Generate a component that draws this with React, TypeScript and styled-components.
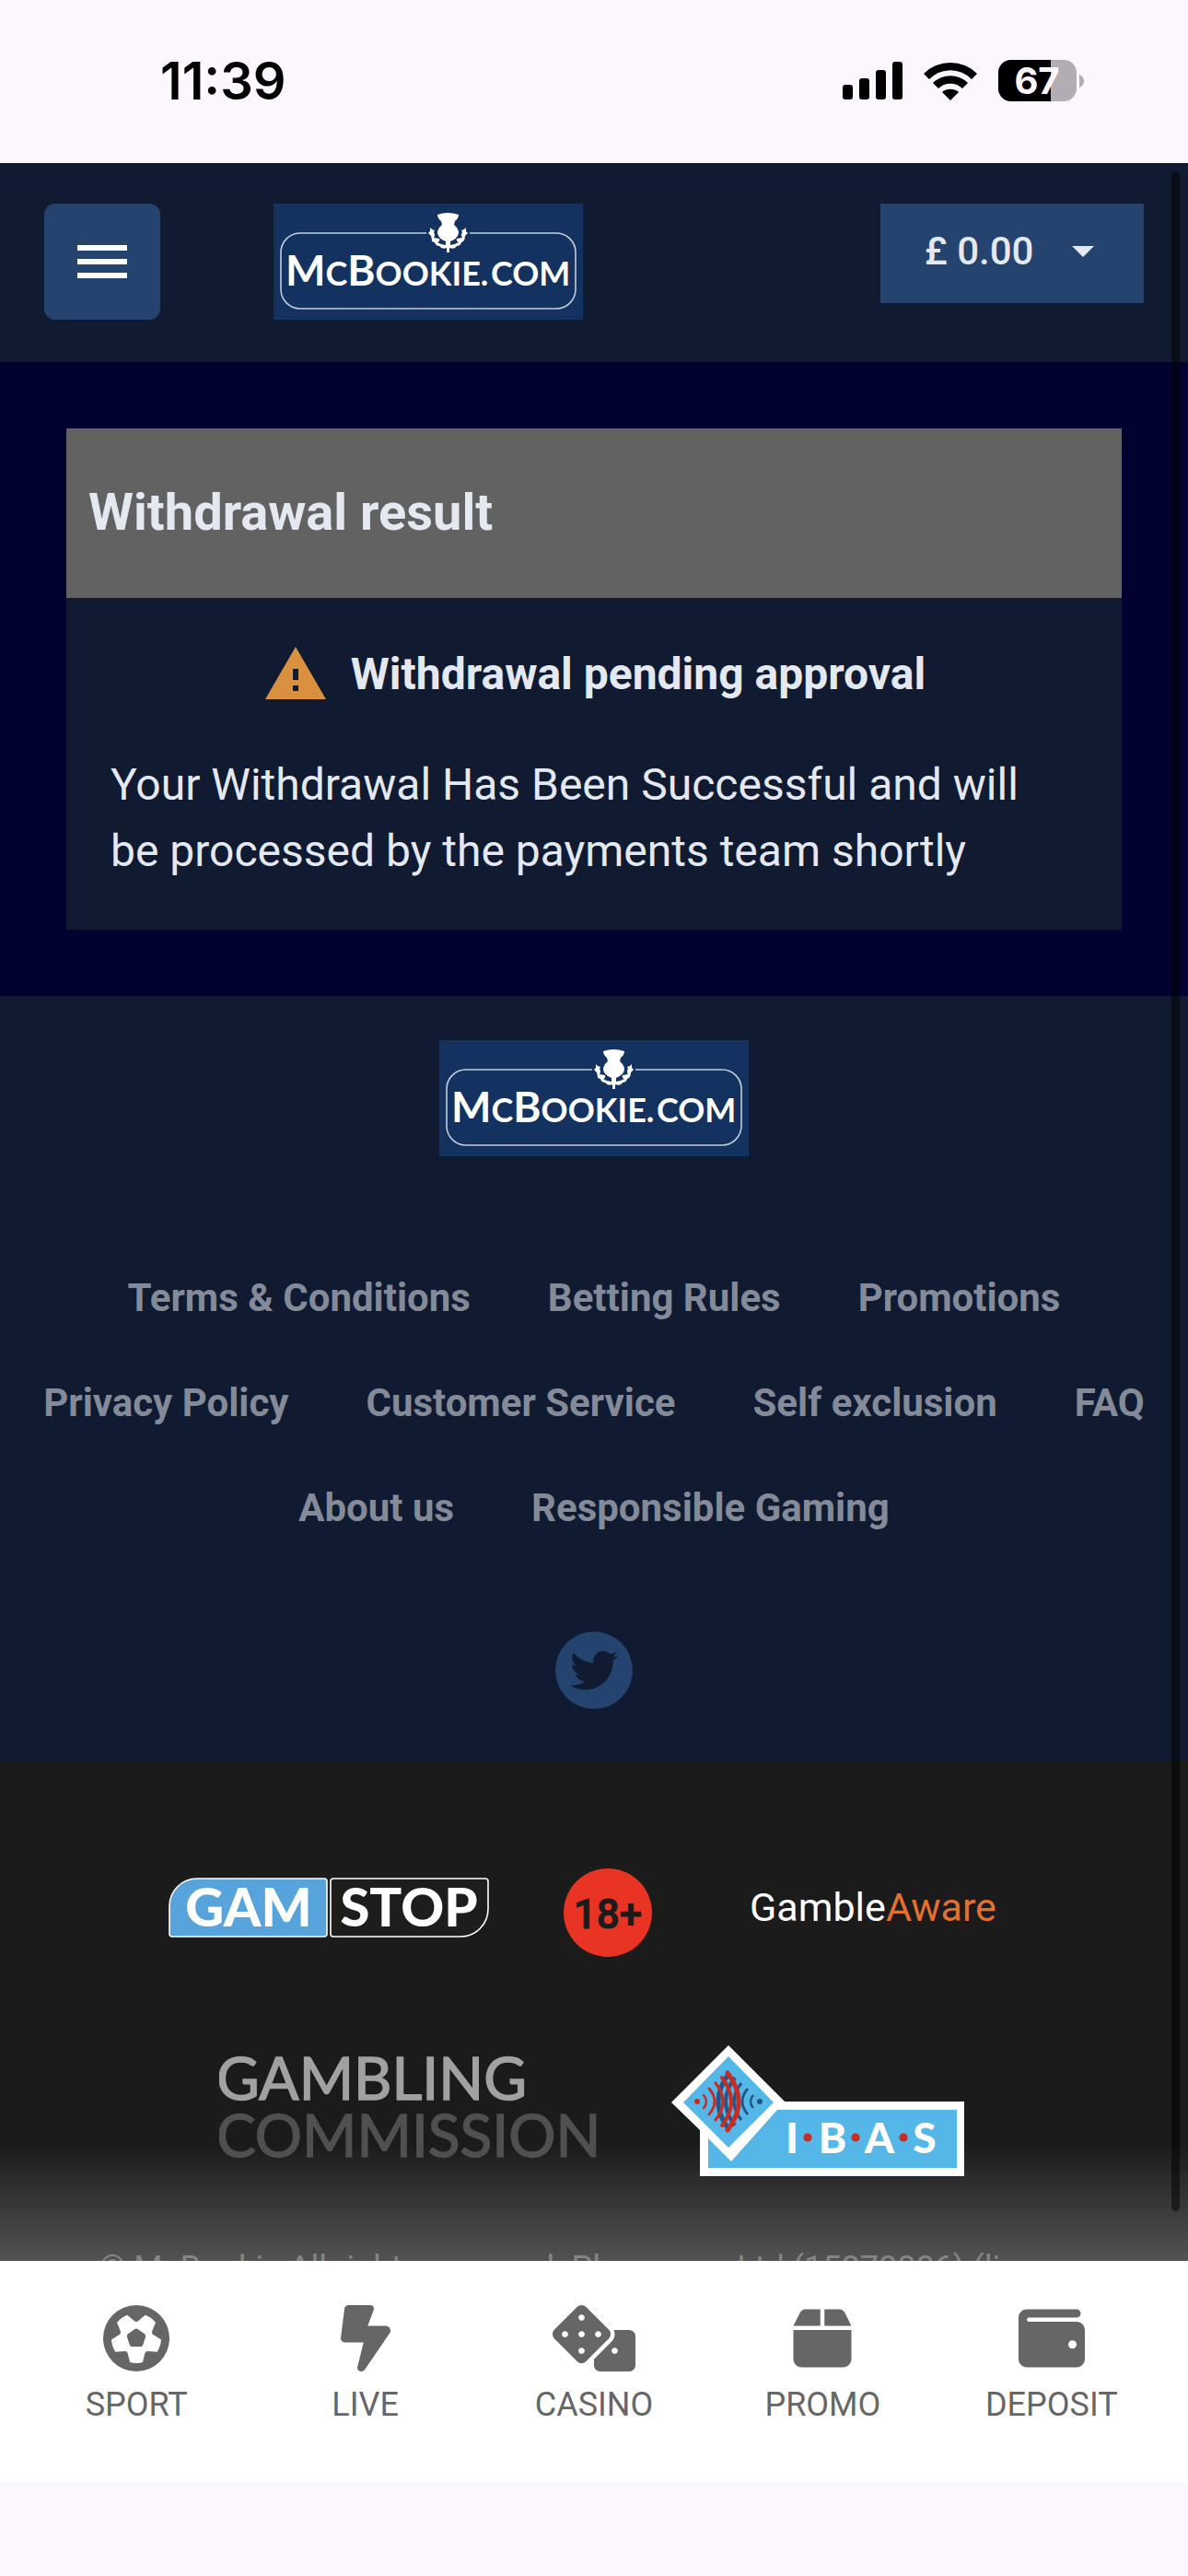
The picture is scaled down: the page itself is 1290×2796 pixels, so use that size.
import React from "react";
import styled, { createGlobalStyle } from "styled-components";
import { FaDice } from "react-icons/fa";
import { MdMenu, MdWarning } from "react-icons/md";
import {
  FaBoltLightning,
  FaBox,
  FaFutbol,
  FaTwitter,
  FaWallet,
} from "react-icons/fa6";

const color = {
  chrome: "#fcf7ff",
  navy: "#101a31",
  deep: "#020230",
  blue: "#24446f",
  logo: "#13325f",
  heading: "#626262",
  text: "#e4e9f1",
  muted: "#838a98",
  amber: "#d9913f",
  dark: "#1b1b1b",
  nav: "#666666",
};

const GlobalStyle = createGlobalStyle`
  *, *::before, *::after { box-sizing: border-box; }
  body {
    margin: 0;
    background: ${color.chrome};
    color: ${color.text};
    font-family: Roboto, "Liberation Sans", sans-serif;
  }
  h1, h2, p, ul { margin: 0; padding: 0; }
  button { border: 0; padding: 0; font: inherit; color: inherit; cursor: pointer; }
  a { color: inherit; text-decoration: none; }
  svg { display: block; flex: none; }
`;

const Screen = styled.div`
  display: flex;
  flex-direction: column;
  height: 100vh;
`;

const StatusBar = styled.div`
  display: flex;
  align-items: center;
  justify-content: space-between;
  height: 177px;
  flex: none;
  padding: 0 112px 2px 174px;
  color: #000;
`;

const Clock = styled.time`
  font: 600 56px/60px Inter, sans-serif;
`;

const Indicators = styled.div`
  display: flex;
  align-items: center;
  gap: 23px;
`;

const Viewport = styled.main`
  position: relative;
  flex: 1;
  min-height: 0;
  overflow: hidden;
  background: ${color.dark};
`;

const ScrollThumb = styled.div`
  position: absolute;
  top: 9px;
  right: 9px;
  bottom: 54px;
  width: 9px;
  border-radius: 5px;
  background: rgba(0, 0, 0, 0.5);
`;

const BottomFade = styled.div`
  position: absolute;
  left: 0;
  right: 0;
  bottom: 0;
  height: 126px;
  background: linear-gradient(rgba(128, 128, 128, 0), rgba(128, 128, 128, 0.55));
  pointer-events: none;
`;

const Header = styled.header`
  display: flex;
  align-items: flex-start;
  padding: 44px 48px 46px;
  background: ${color.navy};
`;

const MenuButton = styled.button`
  display: grid;
  place-items: center;
  width: 126px;
  height: 126px;
  margin-right: 123px;
  border-radius: 12px;
  background: ${color.blue};
  color: #fff;
  font-size: 72px;
`;

const BalanceButton = styled.button`
  display: flex;
  align-items: center;
  justify-content: space-between;
  width: 286px;
  height: 108px;
  margin-left: auto;
  padding: 0 54px 4px 48px;
  background: ${color.blue};
  font-size: 42px;
  font-weight: 500;
  line-height: 48px;
`;

const Result = styled.section`
  padding: 72px;
  background: ${color.deep};
`;

const CardTitle = styled.h1`
  padding: 59px 24px 61px;
  background: ${color.heading};
  font-size: 56px;
  font-weight: 700;
  line-height: 64px;
`;

const CardBody = styled.div`
  display: grid;
  gap: 48px;
  padding: 47px 48px 49px;
  background: ${color.navy};
  font-size: 48px;
  line-height: 72px;
`;

const Pending = styled.h2`
  display: flex;
  align-items: center;
  justify-content: center;
  gap: 24px;
  font-size: 48px;
  font-weight: 700;

  svg {
    width: 72px;
    height: 72px;
    color: ${color.amber};
  }
`;

const Footer = styled.footer`
  display: flex;
  flex-direction: column;
  align-items: center;
  padding: 48px 36px 57px;
  background: ${color.navy};
`;

const FooterLinks = styled.nav`
  display: flex;
  flex-wrap: wrap;
  justify-content: center;
  gap: 66px 84px;
  margin: 130px 0 110px;
  color: ${color.muted};
  font-size: 42px;
  font-weight: 700;
  line-height: 48px;
`;

const SocialLink = styled.a`
  display: grid;
  place-items: center;
  width: 84px;
  height: 84px;
  border-radius: 50%;
  background: ${color.blue};
  color: ${color.navy};
  font-size: 52px;
`;

const Compliance = styled.section`
  position: relative;
  z-index: 1;
  padding: 104px 72px 0;
`;

const Badges = styled.div<{ $gap: number; $after: number }>`
  display: flex;
  align-items: center;
  justify-content: center;
  gap: ${(p) => p.$gap}px;
  margin-bottom: ${(p) => p.$after}px;
`;

const BadgeLink = styled.a`
  display: block;
`;

const AwareLink = styled.a`
  width: 318px;
  text-align: center;
  color: #fff;
  font-size: 43px;
  line-height: 48px;

  span {
    color: #e2702f;
  }
`;

const Copyright = styled.p`
  color: #858585;
  font-size: 36px;
  line-height: 48px;
  text-align: center;
`;

const TabBar = styled.nav`
  display: grid;
  grid-template-columns: repeat(5, 1fr);
  flex: none;
  height: 240px;
  padding: 48px 24px 0;
  background: #fff;
`;

const Tab = styled.a`
  display: flex;
  flex-direction: column;
  align-items: center;
  gap: 15px;
  color: ${color.nav};
  font-size: 36px;
  line-height: 42px;

  svg {
    width: 90px;
    height: 72px;
  }
`;

const HomeArea = styled.div`
  flex: none;
  height: 102px;
`;

function Signal() {
  return (
    <svg width="65" height="41" viewBox="0 0 65 41" aria-hidden="true">
      <rect x="0" y="25" width="11" height="16" rx="3" />
      <rect x="18" y="18" width="11" height="23" rx="3" />
      <rect x="36" y="9" width="11" height="32" rx="3" />
      <rect x="54" y="0" width="11" height="41" rx="3" />
    </svg>
  );
}

function Wifi() {
  return (
    <svg width="58" height="42" viewBox="0 0 58 42" aria-hidden="true">
      <path d="M0 13A41 41 0 0 1 58 13L52 19A32 32 0 0 0 6 19Z" />
      <path d="M10 23A27 27 0 0 1 48 23L42 29A19 19 0 0 0 16 29Z" />
      <path d="M20 33A14 14 0 0 1 38 33L29 42Z" />
    </svg>
  );
}

function Battery() {
  return (
    <svg width="94" height="61" viewBox="0 -8 94 61" role="img" aria-label="Battery">
      <defs>
        <clipPath id="charge">
          <rect width="57" height="46" />
        </clipPath>
      </defs>
      <rect width="85" height="45" rx="14" fill="#b2acb4" />
      <rect width="85" height="45" rx="14" clipPath="url(#charge)" />
      <path d="M88 16Q93 18 93 23T88 30Z" fill="#b2acb4" />
      <text
        x="42"
        y="37"
        textAnchor="middle"
        fill={color.chrome}
        fontFamily="Inter, sans-serif"
        fontSize="40"
        fontWeight="700"
      >
        67
      </text>
    </svg>
  );
}

function McBookieLogo() {
  return (
    <svg width="336" height="126" viewBox="0 0 336 126" role="img" aria-label="McBookie.com">
      <rect width="336" height="126" fill={color.logo} />
      <path
        d="M166 32H29A21 21 0 0 0 8 53V93A21 21 0 0 0 29 114H307A21 21 0 0 0 328 93V53A21 21 0 0 0 307 32H213"
        fill="none"
        stroke="#c3cddb"
        strokeWidth="1.6"
      />
      <g fill="#fff">
        <path d="M178 12Q189 8 201 12Q201 16 197 19L196 23Q201 27 201 32Q200 38 192 41V45Q198 44 201 42Q198 41 199 38L205 37Q203 34 205 31L204 29L207 28L209 26L209 30L211 32L208 35Q208 39 206 41L204 42Q203 46 199 46Q197 50 191 48V53H188V48Q183 50 180 46Q176 46 175 42L172 41Q172 38 171 35L168 32L170 30L170 26L172 28L175 29L174 31Q176 34 174 37L180 38Q181 41 178 42Q182 45 187 45V41Q179 38 178 32Q178 27 183 23L182 19Q178 16 178 12Z" />
        <g fontFamily="Lato, sans-serif" fontWeight="700" fontSize="36">
          <text x="13" y="89">
            <tspan fontSize="46">M</tspan>C<tspan fontSize="46">B</tspan>OOKIE
          </text>
          <text x="229" y="89" textAnchor="middle">.</text>
          <text x="236" y="89">COM</text>
        </g>
      </g>
    </svg>
  );
}

function GamStopLogo() {
  return (
    <svg width="348" height="81" viewBox="0 -8 348 81" role="img" aria-label="GAMSTOP">
      <path d="M31 1H169Q172 1 172 4V61Q172 64 169 64H4Q1 64 1 61V31A30 30 0 0 1 31 1Z" fill="#57a4dc" stroke="#fff" strokeWidth="1.6" />
      <path d="M179 1H344Q347 1 347 4V34A30 30 0 0 1 317 64H179Q176 64 176 61V4Q176 1 179 1Z" fill="#1d1d1b" stroke="#fff" strokeWidth="1.6" />
      <g fill="#fff" fontFamily="Lato, sans-serif" fontWeight="900" fontSize="58" textAnchor="middle">
        <text x="87" y="53">GAM</text>
        <text x="261" y="53">STOP</text>
      </g>
    </svg>
  );
}

function AdultsOnlyLogo() {
  return (
    <svg width="96" height="108" viewBox="0 -12 96 108" role="img" aria-label="18+">
      <circle cx="48" cy="48" r="48" fill="#e93323" />
      <text
        x="48"
        y="65"
        textAnchor="middle"
        fill={color.dark}
        stroke={color.dark}
        strokeWidth="1"
        strokeLinejoin="round"
        fontFamily="Roboto, sans-serif"
        fontWeight="500"
        fontSize="44"
      >
        18+
      </text>
    </svg>
  );
}

function GamblingCommissionLogo() {
  return (
    <svg width="412" height="144" viewBox="0 0 412 144" role="img" aria-label="Gambling Commission">
      <g fontFamily="Lato, sans-serif" fontSize="64" strokeWidth="1.5">
        <text x="-3" y="60" fill="#a1a1a1" stroke="#a1a1a1">GAMBLING</text>
        <text x="-3" y="122" fill="#505050" stroke="#505050">COMMISSION</text>
      </g>
    </svg>
  );
}

const waves = [
  { x: 38, half: 7, back: 3, width: 2.4 },
  { x: 47, half: 14, back: 6, width: 2.8 },
  { x: 56, half: 20, back: 8, width: 3.2 },
  { x: 65, half: 26, back: 10, width: 4 },
  { x: 73, half: 31, back: 12, width: 5 },
];

function IbasLogo() {
  const arcs = waves.map((w) => (
    <path
      key={w.x}
      d={`M${w.x - w.back} ${62 - w.half}Q${w.x + w.back} 62 ${w.x - w.back} ${62 + w.half}`}
      strokeWidth={w.width}
    />
  ));
  return (
    <svg width="324" height="144" viewBox="0 0 324 144" role="img" aria-label="IBAS">
      <path d="M31 62H318V143H31Z" fill="#fff" />
      <path d="M40 71H310V134H40Z" fill="#55b6e8" />
      <path d="M62 1L124 63L115 71L65 127L31 93L0 63Z" fill="#fff" />
      <path d="M62 13L111 63L62 112L13 63Z" fill="#55b6e8" />
      <g fill="none" stroke="#22568a" transform="translate(124 0) scale(-1 1)">
        {arcs}
        <circle cx="28" cy="62" r="3" fill="#22568a" stroke="none" />
      </g>
      <g fill="none" stroke="#c92c20" strokeLinecap="round">
        {arcs}
        <circle cx="28" cy="62" r="3" fill="#c92c20" stroke="none" />
      </g>
      <g fill="#fff" fontFamily="Lato, sans-serif" fontWeight="900" fontSize="46" textAnchor="middle">
        <text x="131" y="118">I</text>
        <text x="175" y="118">B</text>
        <text x="226" y="118">A</text>
        <text x="275" y="118">S</text>
      </g>
      <g fill="#c92c20">
        <circle cx="148" cy="101" r="4.6" />
        <circle cx="200" cy="101" r="4.6" />
        <circle cx="252" cy="101" r="4.6" />
      </g>
    </svg>
  );
}

const footerLinks = [
  "Terms & Conditions",
  "Betting Rules",
  "Promotions",
  "Privacy Policy",
  "Customer Service",
  "Self exclusion",
  "FAQ",
  "About us",
  "Responsible Gaming",
];

const tabs = [
  { label: "SPORT", Icon: FaFutbol },
  { label: "LIVE", Icon: FaBoltLightning },
  { label: "CASINO", Icon: FaDice },
  { label: "PROMO", Icon: FaBox },
  { label: "DEPOSIT", Icon: FaWallet },
];

export default function App() {
  return (
    <Screen>
      <GlobalStyle />
      <StatusBar>
        <Clock>11:39</Clock>
        <Indicators>
          <Signal />
          <Wifi />
          <Battery />
        </Indicators>
      </StatusBar>

      <Viewport>
        <Header>
          <MenuButton type="button" aria-label="Menu">
            <MdMenu />
          </MenuButton>
          <a href="#home">
            <McBookieLogo />
          </a>
          <BalanceButton type="button" aria-haspopup="menu">
            £ 0.00
            <svg width="24" height="12" viewBox="0 0 24 12" aria-hidden="true">
              <path d="M0 0H24L12 12Z" fill={color.text} />
            </svg>
          </BalanceButton>
        </Header>

        <Result>
          <CardTitle>Withdrawal result</CardTitle>
          <CardBody>
            <Pending>
              <MdWarning />
              Withdrawal pending approval
            </Pending>
            <p>
              Your Withdrawal Has Been Successful and will be processed by the
              payments team shortly
            </p>
          </CardBody>
        </Result>

        <Footer>
          <a href="#home">
            <McBookieLogo />
          </a>
          <FooterLinks>
            {footerLinks.map((label) => (
              <a key={label} href="#info">
                {label}
              </a>
            ))}
          </FooterLinks>
          <SocialLink href="#twitter" aria-label="Twitter">
            <FaTwitter />
          </SocialLink>
        </Footer>

        <BottomFade />

        <Compliance>
          <Badges $gap={81} $after={95}>
            <BadgeLink href="#gamstop">
              <GamStopLogo />
            </BadgeLink>
            <BadgeLink href="#adults">
              <AdultsOnlyLogo />
            </BadgeLink>
            <AwareLink href="#aware">
              Gamble<span>Aware</span>
            </AwareLink>
          </Badges>
          <Badges $gap={79} $after={75}>
            <BadgeLink href="#commission">
              <GamblingCommissionLogo />
            </BadgeLink>
            <BadgeLink href="#ibas">
              <IbasLogo />
            </BadgeLink>
          </Badges>
          <Copyright>
            © McBookie All rights reserved. Playrooms Ltd (15878886) (licence
          </Copyright>
        </Compliance>

        <ScrollThumb />
      </Viewport>

      <TabBar>
        {tabs.map(({ label, Icon }) => (
          <Tab key={label} href={`#${label.toLowerCase()}`}>
            <Icon />
            {label}
          </Tab>
        ))}
      </TabBar>
      <HomeArea />
    </Screen>
  );
}
